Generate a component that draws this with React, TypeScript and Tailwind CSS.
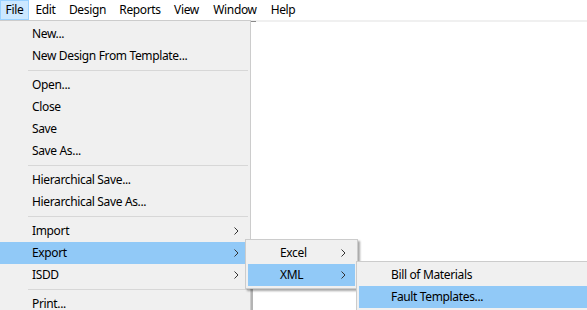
import React from "react"

type Item = { label: string; arrow?: boolean; active?: boolean } | "sep"

const fileItems: Item[] = [
  { label: "New..." },
  { label: "New Design From Template..." },
  "sep",
  { label: "Open..." },
  { label: "Close" },
  { label: "Save" },
  { label: "Save As..." },
  "sep",
  { label: "Hierarchical Save..." },
  { label: "Hierarchical Save As..." },
  "sep",
  { label: "Import", arrow: true },
  { label: "Export", arrow: true, active: true },
  { label: "ISDD", arrow: true },
  "sep",
  { label: "Print..." },
]

const bar = [
  { label: "File", w: "w-[29px]", open: true },
  { label: "Edit", w: "w-[33px]" },
  { label: "Design", w: "w-[51px]" },
  { label: "Reports", w: "w-[54px]" },
  { label: "View", w: "w-[39px]" },
  { label: "Window", w: "w-[58px]" },
  { label: "Help", w: "w-[38px]" },
]

const Chevron = () => (
  <svg width="5" height="8" viewBox="0 0 5 8" className="shrink-0">
    <path d="M0.5 0.5 L4 4 L0.5 7.5" fill="none" stroke="#333" strokeWidth="1" />
  </svg>
)

const MenuRows = ({ items }: { items: Item[] }) => (
  <>
    {items.map((it, i) =>
      it === "sep" ? (
        <div key={i} className="h-[7px] flex items-start pt-[3px] pl-[28px]">
          <div className="h-px w-full bg-[#d7d7d7]" />
        </div>
      ) : (
        <div
          key={i}
          className={`h-[22px] flex items-center pl-[32px] pr-[9px] ${it.active ? "bg-[#91c9f7]" : ""}`}
        >
          <span className="flex-1 whitespace-nowrap">{it.label}</span>
          {it.arrow && <Chevron />}
        </div>
      )
    )}
  </>
)

export default function App() {
  return (
    <div
      className="relative w-[587px] h-[310px] overflow-hidden bg-white text-[12px] tracking-[-0.35px] text-black leading-none"
      style={{ fontFamily: "'Segoe UI', 'Noto Sans', sans-serif" }}
    >
      {/* menu bar */}
      <div className="flex h-[22px] border-b-2 border-[#f0f0f0]">
        {bar.map((b) => (
          <div
            key={b.label}
            className={`${b.w} h-[20px] flex items-center justify-center ${
              b.open ? "bg-[#cce8ff] border border-[#99d1ff]" : ""
            }`}
          >
            {b.label}
          </div>
        ))}
      </div>

      {/* bits of the window behind */}
      <div className="absolute left-[251px] top-[21px] w-[5px] h-px bg-[#8a8a8a]" />
      <div className="absolute left-[251px] top-[289px] w-[2px] h-[21px] bg-[#b4b4b4]" />

      {/* File menu */}
      <div className="absolute left-[-3px] top-[20px] w-[254px] bg-[#f0f0f0] border border-[#cccccc] p-[2px]">
        <MenuRows items={fileItems} />
      </div>

      {/* Export submenu */}
      <div className="absolute left-[245px] top-[239px] w-[113px] bg-[#f0f0f0] border border-[#cccccc] p-[2px] shadow-[2px_2px_2px_rgba(0,0,0,0.35)]">
        <MenuRows items={[{ label: "Excel", arrow: true }, { label: "XML", arrow: true, active: true }]} />
      </div>

      {/* XML submenu */}
      <div className="absolute left-[356px] top-[261px] w-[260px] bg-[#f0f0f0] border border-[#cccccc] p-[2px] shadow-[2px_2px_2px_rgba(0,0,0,0.35)]">
        <MenuRows items={[{ label: "Bill of Materials" }, { label: "Fault Templates...", active: true }]} />
      </div>
    </div>
  )
}
